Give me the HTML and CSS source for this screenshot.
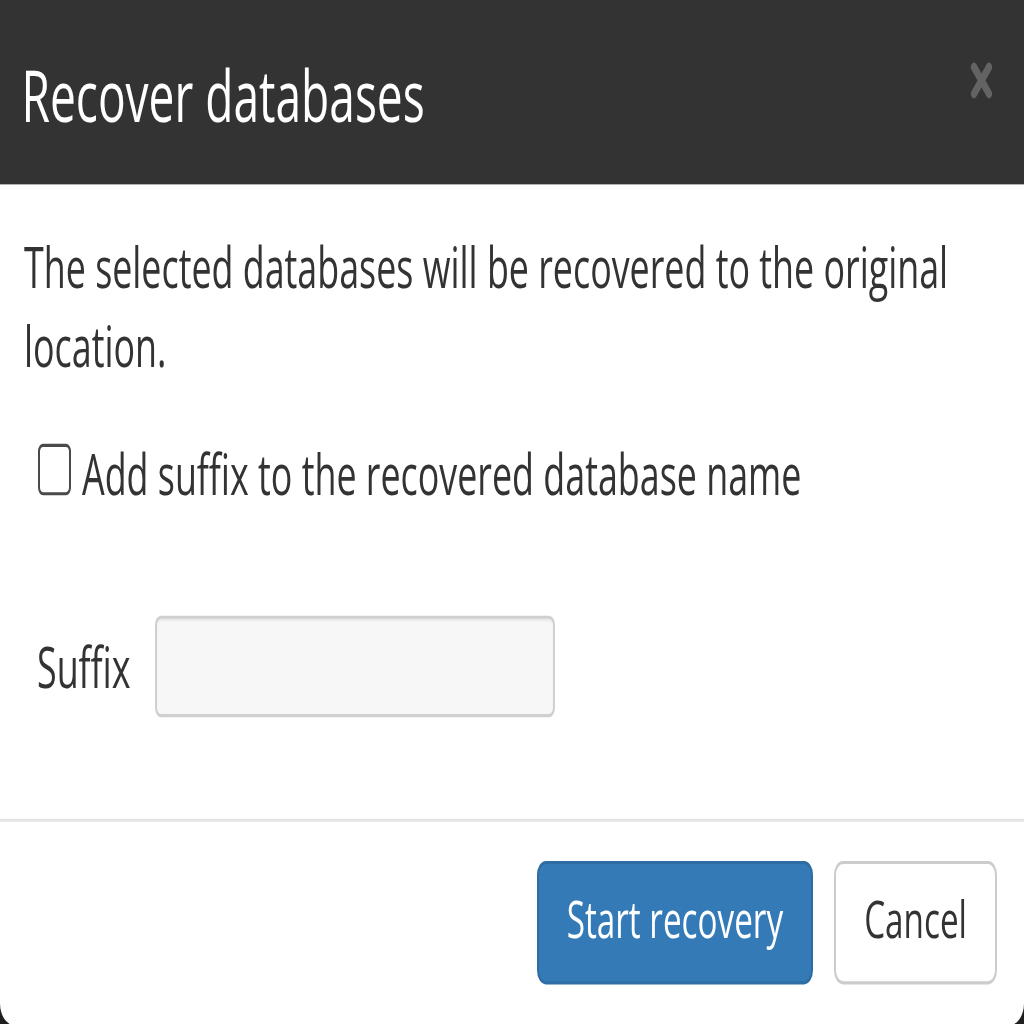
FILE: index.html
```html
<!DOCTYPE html>
<html lang="en">
<head>
<meta charset="utf-8">
<title>Recover databases</title>
<link rel="stylesheet" href="styles.css">
</head>
<body>
<div class="frame">
  <div class="stage">
    <div class="modal">
      <div class="modal-header">
        <h4 class="modal-title">Recover databases</h4>
        <svg class="close" viewBox="0 0 27 27" width="27" height="27" aria-label="Close">
          <line x1="6" y1="5" x2="21" y2="22" />
          <line x1="21" y1="5" x2="6" y2="22" />
        </svg>
      </div>
      <div class="modal-body">
        <p class="intro">The selected databases will be recovered to the original location.</p>
        <label class="check-row"><input type="checkbox" class="check"><span>Add suffix to the recovered database name</span></label>
        <div class="suffix-row">
          <label class="suffix-label" for="suffix">Suffix</label>
          <input id="suffix" class="suffix-input" type="text">
        </div>
      </div>
      <div class="modal-footer">
        <button class="btn btn-primary" type="button">Start recovery</button>
        <button class="btn btn-default" type="button">Cancel</button>
      </div>
    </div>
  </div>
</div>
</body>
</html>
```
FILE: styles.css
```css
html {
  background: #1f1f1f;
}

body {
  margin: 0;
  padding: 0;
}

.frame {
  width: 1024px;
  height: 1024px;
  overflow: hidden;
}

/* The reference is a dialog stretched vertically; lay out flat, then stretch */
.stage {
  width: 1024px;
  height: 655.36px;
  transform: scaleY(1.5625);
  transform-origin: 0 0;
}

.modal {
  width: 1024px;
  height: 656px;
  background: #ffffff;
  border-radius: 0 0 14px 14px;
  overflow: hidden;
  display: flex;
  flex-direction: column;
  font-family: "Open Sans", "Liberation Sans", sans-serif;
  color: #333333;
}

.modal-header {
  background: #333333;
  height: 118.4px;
  box-sizing: border-box;
  padding: 35.5px 29px 0 21.5px;
  display: flex;
  align-items: flex-start;
  justify-content: space-between;
  flex: none;
}

.modal-title {
  margin: 0;
  font-size: 46.08px;
  line-height: 1.1;
  font-weight: 400;
  color: #ffffff;
}

.close {
  margin-top: 2.9px;
  flex: none;
}

.close line {
  stroke: #636363;
  stroke-width: 6;
  stroke-linecap: round;
}

.modal-body {
  flex: 1;
  padding: 26.4px 24px 0 24px;
  font-size: 35.84px;
  line-height: 51.2px;
}

.intro {
  margin: 0;
  width: 960px;
}

.check-row {
  display: block;
  margin-top: 30.7px;
  white-space: nowrap;
}

.check {
  appearance: none;
  -webkit-appearance: none;
  box-sizing: border-box;
  width: 33px;
  height: 33px;
  margin: 0 11px 0 14px;
  border: 2.5px solid #4a4a4a;
  border-radius: 5px;
  background: #ffffff;
  vertical-align: baseline;
}

.suffix-row {
  display: flex;
  align-items: center;
  margin-top: 64.5px;
}

.suffix-label {
  margin-left: 13px;
  width: 118px;
  flex: none;
}

.suffix-input {
  box-sizing: border-box;
  width: 400px;
  height: 65.3px;
  border: 2.5px solid #cfcfcf;
  border-radius: 6px;
  background: #f7f7f7;
  box-shadow: inset 0 1.5px 1.5px rgba(0, 0, 0, 0.06);
  outline: none;
  margin: 0;
  padding: 0 16px;
  font: inherit;
}

.modal-footer {
  flex: none;
  border-top: 2px solid #e5e5e5;
  padding: 24.8px 27px 0 0;
  height: 131.8px;
  box-sizing: border-box;
  display: flex;
  justify-content: flex-end;
  align-items: flex-start;
  gap: 21px;
}

.btn {
  box-sizing: border-box;
  height: 78.7px;
  padding: 0 28px 4.5px;
  line-height: 69.2px;
  font-family: "Open Sans", "Liberation Sans", sans-serif;
  font-size: 33.28px;
  font-weight: 400;
  border: 2.5px solid transparent;
  border-radius: 9px;
  cursor: pointer;
  white-space: nowrap;
}

.btn-primary {
  background: #337ab7;
  border-color: #2e6da4;
  color: #ffffff;
}

.btn-default {
  background: #ffffff;
  border-color: #cccccc;
  color: #333333;
}
```
